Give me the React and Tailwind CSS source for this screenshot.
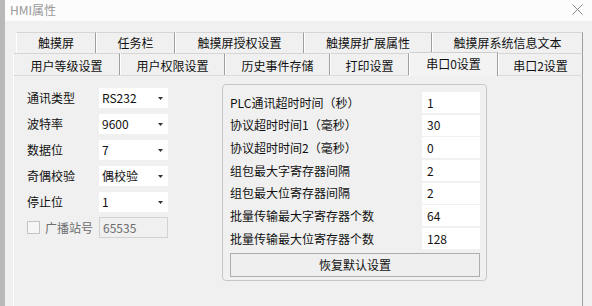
const font = { fontFamily: '"Noto Sans CJK SC", "Noto Sans", sans-serif' };

const topTabs = [
  { label: "触摸屏", w: "w-[80px]" },
  { label: "任务栏", w: "w-[79px]" },
  { label: "触摸屏授权设置", w: "w-[129px]" },
  { label: "触摸屏扩展属性", w: "w-[128px]" },
  { label: "触摸屏系统信息文本", w: "w-[151px]" },
];

const bottomTabs = [
  { label: "用户等级设置", w: "w-[107px]" },
  { label: "用户权限设置", w: "w-[105px]" },
  { label: "历史事件存储", w: "w-[105px]" },
  { label: "打印设置", w: "w-[79px]" },
  { label: "串口0设置", w: "w-[89px]", active: true },
  { label: "串口2设置", w: "w-[85px]" },
];

const serial = [
  { label: "通讯类型", value: "RS232" },
  { label: "波特率", value: "9600" },
  { label: "数据位", value: "7" },
  { label: "奇偶校验", value: "偶校验" },
  { label: "停止位", value: "1" },
];

const timing = [
  { label: "PLC通讯超时时间（秒）", value: "1" },
  { label: "协议超时时间1（毫秒）", value: "30" },
  { label: "协议超时时间2（毫秒）", value: "0" },
  { label: "组包最大字寄存器间隔", value: "2" },
  { label: "组包最大位寄存器间隔", value: "2" },
  { label: "批量传输最大字寄存器个数", value: "64" },
  { label: "批量传输最大位寄存器个数", value: "128" },
];

function Arrow() {
  return (
    <svg width="5" height="3" viewBox="0 0 5 3">
      <path d="M0 0h5L2.5 3z" fill="#333" />
    </svg>
  );
}

export default function App() {
  return (
    <div className="w-[592px] h-[306px] flex overflow-hidden text-[12px] text-[#111]" style={font}>
      <div className="w-[5px] bg-[#b9b9b9]" />
      <div className="flex-1 flex flex-col">
        {/* title bar */}
        <div className="h-[21px] bg-[#fcfcfc] flex items-center justify-between pl-[5px] pr-[9px]">
          <span className="text-[#9a9a9a] leading-none mb-[2px]">HMI属性</span>
          <svg width="11" height="11" viewBox="0 0 11 11" className="mb-[3px]">
            <path d="M0.5 0.5l10 10M10.5 0.5l-10 10" stroke="#8a8a8a" strokeWidth="1" />
          </svg>
        </div>

        <div className="flex-1 bg-[#f0f0f0] pt-[11px] pl-[8px] flex flex-col">
          {/* tab row 1 */}
          <div className="flex h-[21px] ml-[3px]">
            {topTabs.map((t) => (
              <div
                key={t.label}
                className={`${t.w} h-full flex items-center justify-center border-t border-l border-r border-t-[#d6d6d6] border-l-white border-r-[#9f9f9f] leading-none`}
              >
                {t.label}
              </div>
            ))}
          </div>

          {/* tab row 2 */}
          <div className="flex h-[22px] items-end">
            {bottomTabs.map((t) =>
              t.active ? (
                <div
                  key={t.label}
                  className={`${t.w} h-[24px] -mb-px relative z-10 bg-[#f3f3f3] flex items-start pt-[5px] justify-center border-t border-l border-r border-t-[#cfcfcf] border-l-white border-r-[#9f9f9f] leading-none`}
                >
                  {t.label}
                </div>
              ) : (
                <div
                  key={t.label}
                  className={`${t.w} h-[22px] flex items-center justify-center pt-[2px] border-t border-l border-r border-t-[#d6d6d6] border-l-white border-r-[#9f9f9f] leading-none`}
                >
                  {t.label}
                </div>
              )
            )}
          </div>

          {/* panel */}
          <div className="w-[570px] flex-1 border-t border-l border-r border-t-[#dcdcdc] border-l-white border-r-[#9f9f9f] bg-[#f0f0f0] flex items-start pl-[13px] pt-[12px]">
            <div className="w-[141px] flex flex-col gap-[6px]">
              {serial.map((r) => (
                <div key={r.label} className="flex items-center h-[20px]">
                  <span className="w-[72px] leading-none">{r.label}</span>
                  <div className="w-[69px] h-[20px] bg-white flex items-center justify-between pl-[3px] pr-[5px]">
                    <span className="leading-none">{r.value}</span>
                    <Arrow />
                  </div>
                </div>
              ))}
              <div className="flex items-center h-[21px] -mt-[1px]">
                <div className="w-[13px] h-[13px] border border-[#c4c4c4] bg-[#f6f6f6]" />
                <span className="w-[59px] pl-[5px] leading-none text-[#6d6d6d]">广播站号</span>
                <div className="w-[69px] h-[21px] bg-[#f0f0f0] border border-[#d2d2d2] flex items-center pl-[3px] text-[#6d6d6d] leading-none">
                  65535
                </div>
              </div>
            </div>

            <div className="ml-[54px] -mt-[4px] w-[265px] h-[197px] border border-[#c6c6c6] rounded-[4px] pt-[7px] pl-[7px] pr-[6px] flex flex-col">
              <div className="flex flex-col gap-[1.7px]">
                {timing.map((r) => (
                  <div key={r.label} className="flex items-center h-[21px]">
                    <span className="flex-1 leading-none">{r.label}</span>
                    <div className="w-[58px] h-[21px] bg-white flex items-center pl-[5px] leading-none">{r.value}</div>
                  </div>
                ))}
              </div>
              <button className="mt-[4px] h-[24px] border border-[#adadad] bg-[#efefef] flex items-center justify-center leading-none text-[12px]">
                恢复默认设置
              </button>
            </div>
          </div>
        </div>
      </div>
    </div>
  );
}
